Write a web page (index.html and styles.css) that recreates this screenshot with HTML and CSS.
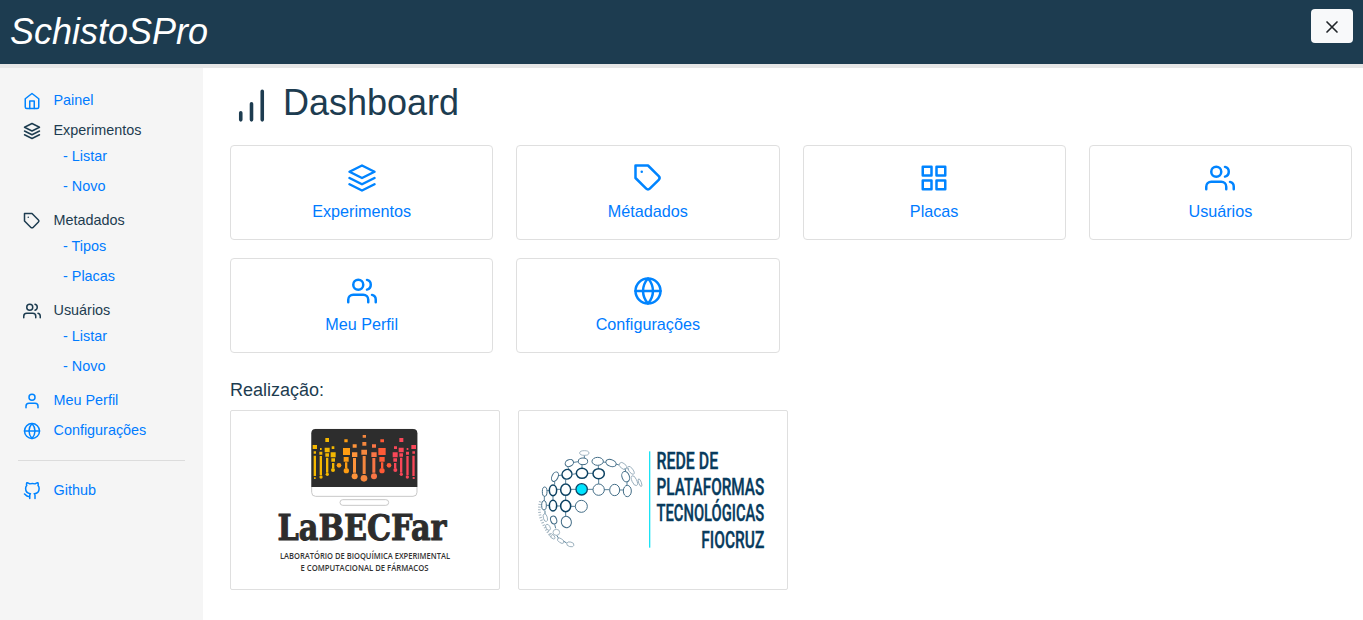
FILE: index.html
```html
<!DOCTYPE html>
<html lang="pt-BR">
<head>
<meta charset="utf-8">
<title>SchistoSPro</title>
<link rel="stylesheet" href="styles.css">
</head>
<body>
<svg class="sprite" aria-hidden="true">
  <symbol id="home" viewBox="0 0 24 24"><path d="M3 9l9-7 9 7v11a2 2 0 0 1-2 2H5a2 2 0 0 1-2-2z"/><path d="M9 22V12h6v10"/></symbol>
  <symbol id="layers" viewBox="0 0 24 24"><path d="M12 2L2 7l10 5 10-5z"/><path d="M2 17l10 5 10-5"/><path d="M2 12l10 5 10-5"/></symbol>
  <symbol id="tag" viewBox="0 0 24 24"><path d="M20.59 13.41l-7.17 7.17a2 2 0 0 1-2.83 0L2 12V2h10l8.59 8.59a2 2 0 0 1 0 2.82z"/><path d="M7 7h.01"/></symbol>
  <symbol id="users" viewBox="0 0 24 24"><path d="M17 21v-2a4 4 0 0 0-4-4H5a4 4 0 0 0-4 4v2"/><circle cx="9" cy="7" r="4"/><path d="M23 21v-2a4 4 0 0 0-3-3.87"/><path d="M16 3.13a4 4 0 0 1 0 7.75"/></symbol>
  <symbol id="user" viewBox="0 0 24 24"><path d="M20 21v-2a4 4 0 0 0-4-4H8a4 4 0 0 0-4 4v2"/><circle cx="12" cy="7" r="4"/></symbol>
  <symbol id="globe" viewBox="0 0 24 24"><circle cx="12" cy="12" r="10"/><path d="M2 12h20"/><path d="M12 2a15.3 15.3 0 0 1 4 10 15.3 15.3 0 0 1-4 10 15.3 15.3 0 0 1-4-10 15.3 15.3 0 0 1 4-10z"/></symbol>
  <symbol id="grid" viewBox="0 0 24 24"><path d="M3 3h7v7H3zM14 3h7v7h-7zM14 14h7v7h-7zM3 14h7v7H3z"/></symbol>
  <symbol id="github" viewBox="0 0 24 24"><path d="M9 19c-5 1.5-5-2.5-7-3m14 6v-3.87a3.37 3.37 0 0 0-.94-2.61c3.14-.35 6.44-1.54 6.44-7A5.44 5.44 0 0 0 20 4.77 5.07 5.07 0 0 0 19.91 1S18.73.65 16 2.48a13.38 13.38 0 0 0-7 0C6.27.65 5.09 1 5.09 1A5.07 5.07 0 0 0 5 4.77a5.44 5.44 0 0 0-1.5 3.78c0 5.42 3.3 6.61 6.44 7A3.37 3.37 0 0 0 9 18.13V22"/></symbol>
  <symbol id="bars" viewBox="0 0 24 24"><path d="M18 20V4M12 20v-9M6 20v-4"/></symbol>
  <symbol id="close" viewBox="0 0 24 24"><path d="M18 6L6 18M6 6l12 12"/></symbol>
</svg>

<header class="topbar">
  <div class="brand">SchistoSPro</div>
  <button class="close-btn" aria-label="Fechar"><svg class="icon"><use href="#close"/></svg></button>
</header>

<div class="layout">
  <nav class="sidebar">
    <a class="item"><svg class="icon"><use href="#home"/></svg>Painel</a>
    <div class="item group"><svg class="icon"><use href="#layers"/></svg>Experimentos</div>
    <div class="sub"><a>- Listar</a><a>- Novo</a></div>
    <div class="item group"><svg class="icon"><use href="#tag"/></svg>Metadados</div>
    <div class="sub"><a>- Tipos</a><a>- Placas</a></div>
    <div class="item group"><svg class="icon"><use href="#users"/></svg>Usuários</div>
    <div class="sub"><a>- Listar</a><a>- Novo</a></div>
    <a class="item"><svg class="icon"><use href="#user"/></svg>Meu Perfil</a>
    <a class="item"><svg class="icon"><use href="#globe"/></svg>Configurações</a>
    <hr class="divider">
    <a class="item"><svg class="icon"><use href="#github"/></svg>Github</a>
  </nav>

  <main class="content">
    <h1 class="title"><svg class="icon"><use href="#bars"/></svg>Dashboard</h1>
    <div class="cards">
      <a class="card"><svg class="icon"><use href="#layers"/></svg>Experimentos</a>
      <a class="card"><svg class="icon"><use href="#tag"/></svg>Métadados</a>
      <a class="card"><svg class="icon"><use href="#grid"/></svg>Placas</a>
      <a class="card"><svg class="icon"><use href="#users"/></svg>Usuários</a>
      <a class="card"><svg class="icon"><use href="#users"/></svg>Meu Perfil</a>
      <a class="card"><svg class="icon"><use href="#globe"/></svg>Configurações</a>
    </div>
    <h2 class="subtitle">Realização:</h2>
    <div class="partners">
      <div class="partner">
        <svg class="logo" viewBox="0 0 268 178">
          <g transform="translate(64 9) scale(.33333)">
            <rect x="50" y="28" width="316" height="201" rx="12" fill="#fff" stroke="#c8c8c8" stroke-width="3"/>
            <path d="M49 201V40q0-13 13-13h292q13 0 13 13v161z" fill="#2d2d2d"/>
            <rect x="135" y="239" width="146" height="17" rx="8.500" fill="#fff" stroke="#c8c8c8" stroke-width="3"/>
            <g fill="#f5b800">
              <path d="M53 75h13v12H53zM56 94h7v7h-7zM56 107h7v61h-7zM57 172h5v5h-5zM75 84h5v6h-5zM73 95h9v9h-9zM74 108h7v57h-7zM91 54h11v12H91zM89 83h15v14H89zM91 100h11v10H91zM93 113h7v45h-7zM110 79h8v8h-8zM107 97h15v15h-15zM109 115h11v10h-11zM111 129h7v16h-7z"/>
              <circle cx="78" cy="171" r="5"/><circle cx="97" cy="163" r="5"/><circle cx="114" cy="150" r="6"/>
            </g>
            <g fill="#ff9d12">
              <path d="M144 84h21v21h-21zM146 111h15v14h-15zM150 127h7v17h-7zM148 58h10v9h-10z"/>
              <circle cx="132" cy="136" r="7"/><circle cx="154" cy="152" r="8"/>
            </g>
            <g fill="#ff943a">
              <path d="M173 73h12v10h-12zM171 97h16v14h-16zM174 114h9v44h-9z"/>
              <circle cx="179" cy="169" r="9"/>
            </g>
            <g fill="#f5873e">
              <path d="M203 45h10v8h-10zM202 66h12v11h-12zM199 89h17v15h-17zM203 108h9v54h-9z"/>
              <circle cx="207" cy="175" r="10"/>
            </g>
            <g fill="#fa7545">
              <path d="M231 73h12v10h-12zM229 97h16v14h-16zM232 114h9v44h-9z"/>
              <circle cx="237" cy="169" r="9"/>
            </g>
            <g fill="#ff5a36">
              <path d="M256 58h11v9h-11zM250 84h22v21h-22zM253 111h16v14h-16zM258 127h7v17h-7z"/>
              <circle cx="261" cy="152" r="8"/><circle cx="282" cy="136" r="7"/>
            </g>
            <g fill="#f94758">
              <path d="M297 79h9v8h-9zM293 97h15v15h-15zM295 115h11v10h-11zM297 129h7v16h-7zM313 54h12v12h-12zM311 83h15v14h-15zM313 100h11v10h-11zM315 113h7v45h-7zM335 84h5v6h-5zM333 95h9v9h-9zM334 108h7v57h-7zM349 75h14v12h-14zM352 94h8v7h-8zM352 107h7v61h-7zM353 171h6v6h-6z"/>
              <circle cx="301" cy="150" r="6"/><circle cx="319" cy="163" r="5"/><circle cx="337" cy="171" r="5"/>
            </g>
          </g>
          <text class="labec" x="46.500" y="129" textLength="169" lengthAdjust="spacingAndGlyphs">LaBECFar</text>
          <text class="labec-sub" x="49" y="148.200" textLength="170" lengthAdjust="spacingAndGlyphs">LABORATÓRIO DE BIOQUÍMICA EXPERIMENTAL</text>
          <text class="labec-sub" x="69.500" y="160.200" textLength="128" lengthAdjust="spacingAndGlyphs">E COMPUTACIONAL DE FÁRMACOS</text>
        </svg>
      </div>
      <div class="partner">
        <svg class="logo" viewBox="0 0 268 178">
          <g class="net" transform="translate(11 29) scale(.33333)">
            <path class="link" d="M163 46v8M132 67l13-2M156 75v10M113 80l5 10M127 103l12-2M172 100h17M205 76v9M219 66l9 1M258 72l9 3M285 84l2 10M293 86l4 2M206 116v16M222 149h15M269 150h10M291 124v12M172 148h17M122 148h17M80 148h10M51 152h7M107 119v12M107 165v15M107 214v14M122 199h14M80 198h10M49 196h8M69 167v14M43 168v14M74 124v10M84 107l12-2M74 253l3 12M80 286l6 9M100 303l10 6M45 212v10"/>
            <g class="strong">
              <ellipse cx="156" cy="100" rx="17" ry="15"/><ellipse cx="206" cy="101" rx="17" ry="15"/>
              <ellipse cx="111" cy="103" rx="15" ry="14" transform="rotate(-35 111 103)"/><ellipse cx="107" cy="149" rx="15" ry="17"/>
              <ellipse cx="107" cy="198" rx="15" ry="17"/><ellipse cx="69" cy="151" rx="11" ry="16"/><ellipse cx="69" cy="197" rx="11" ry="16"/>
            </g>
            <g class="medium">
              <ellipse cx="75" cy="110" rx="9" ry="15" transform="rotate(25 75 110)"/><ellipse cx="44" cy="155" rx="7" ry="14"/>
              <ellipse cx="42" cy="196" rx="7" ry="14"/><circle cx="206" cy="149" r="17"/><circle cx="154" cy="199" r="18"/>
              <ellipse cx="254" cy="150" rx="15" ry="17"/><ellipse cx="292" cy="153" rx="12" ry="17"/>
              <ellipse cx="109" cy="246" rx="15" ry="17" transform="rotate(-15 109 246)"/><ellipse cx="203" cy="64" rx="17" ry="12"/>
              <ellipse cx="159" cy="64" rx="14" ry="10"/><ellipse cx="118" cy="69" rx="13" ry="10" transform="rotate(-25 118 69)"/>
              <ellipse cx="243" cy="69" rx="16" ry="10" transform="rotate(20 243 69)"/><ellipse cx="287" cy="110" rx="11" ry="16" transform="rotate(-20 287 110)"/>
              <ellipse cx="71" cy="240" rx="9" ry="12" transform="rotate(-20 71 240)"/>
            </g>
            <g class="faint">
              <ellipse cx="163" cy="39" rx="14" ry="7"/><ellipse cx="279" cy="78" rx="13" ry="8" transform="rotate(40 279 78)"/>
              <ellipse cx="303" cy="91" rx="14" ry="6" transform="rotate(55 303 91)"/><ellipse cx="313" cy="122" rx="16" ry="7" transform="rotate(65 313 122)"/>
              <ellipse cx="330" cy="128" rx="12" ry="4" transform="rotate(70 330 128)"/><ellipse cx="46" cy="233" rx="6" ry="12" transform="rotate(-15 46 233)"/>
              <ellipse cx="79" cy="277" rx="10" ry="9"/><ellipse cx="92" cy="302" rx="11" ry="6" transform="rotate(35 92 302)"/>
              <ellipse cx="121" cy="313" rx="11" ry="7" transform="rotate(15 121 313)"/><ellipse cx="54" cy="262" rx="6" ry="10" transform="rotate(-30 54 262)"/>
              <ellipse cx="67" cy="289" rx="10" ry="5" transform="rotate(45 67 289)"/>
            </g>
            <path class="dots" d="M31 184Q23 214 36 244T68 294"/>
            <circle cx="155" cy="148" r="17" fill="#00e5ff" stroke="#0b4668" stroke-width="4"/>
            <path d="M359 34v289" stroke="#1be3f5" stroke-width="4"/>
          </g>
          <g class="rede" transform="translate(137.500 0) scale(.7 1)">
            <text x="0" y="58" textLength="88" lengthAdjust="spacingAndGlyphs">REDE DE</text>
            <text x="0" y="84.300" textLength="154" lengthAdjust="spacingAndGlyphs">PLATAFORMAS</text>
            <text x="0" y="110.500" textLength="154" lengthAdjust="spacingAndGlyphs">TECNOLÓGICAS</text>
            <text x="64" y="136.800" textLength="90" lengthAdjust="spacingAndGlyphs">FIOCRUZ</text>
          </g>
        </svg>
      </div>
    </div>
  </main>
</div>
</body>
</html>
```
FILE: styles.css
```css
* { box-sizing: border-box; }

body {
  margin: 0;
  height: 620px;
  display: flex;
  flex-direction: column;
  overflow: hidden;
  background: #fff;
  color: #1d3c50;
  font-family: "Liberation Sans", Arial, sans-serif;
  font-size: 16px;
}

.sprite { display: none; }

.icon {
  flex: none;
  fill: none;
  stroke: currentColor;
  stroke-width: 2;
  stroke-linecap: round;
  stroke-linejoin: round;
}

.topbar {
  flex: none;
  height: 68px;
  display: flex;
  justify-content: space-between;
  align-items: flex-start;
  padding: 9px 10px 0;
  background: #1d3c50;
  border-bottom: 4px solid #e6e6e6;
}

.brand {
  color: #fff;
  font-size: 36px;
  font-style: italic;
  line-height: 46px;
}

.close-btn {
  width: 42px;
  height: 34px;
  display: flex;
  align-items: center;
  justify-content: center;
  padding: 2px 0 0;
  border: 0;
  border-radius: 4px;
  background: #f8f9fa;
  color: #212529;
}

.close-btn .icon { width: 20px; height: 20px; }

.layout { flex: 1; display: flex; }

.sidebar {
  flex: none;
  width: 203px;
  padding: 17px 18px 0;
  background: #f5f5f5;
  font-size: 14.4px;
}

.sidebar a, .card { color: #007bff; }

.sidebar a .icon, .card .icon { color: #0084ff; }

.item {
  height: 30px;
  display: flex;
  align-items: center;
  gap: 12.500px;
  padding-left: 5px;
}

.sidebar .item.group { color: #1d3c50; }

.item .icon { width: 18px; height: 18px; margin-top: 2px; }

.sub { margin: -4px 0 4px; padding-left: 45px; }

.sub a { display: block; line-height: 30px; }

.divider {
  height: 1px;
  margin: 15px 0 14px;
  border: 0;
  background: #dcdcdc;
}

.content { flex: 1; padding: 13px 11px 0 27px; }

.title {
  display: flex;
  align-items: center;
  gap: 10px;
  height: 44px;
  margin: 0 0 20px;
  font-size: 36px;
  font-weight: 400;
}

.title .icon { width: 43px; height: 43px; margin: 5px 0 0; }

.cards {
  display: grid;
  grid-template-columns: repeat(4, 1fr);
  gap: 18px 23px;
}

.card {
  height: 95px;
  display: flex;
  flex-direction: column;
  align-items: center;
  padding-top: 17px;
  border: 1px solid #dfdfdf;
  border-radius: 4px;
  font-size: 16.200px;
  line-height: 24px;
}

.card .icon { width: 30px; height: 30px; margin-bottom: 6px; }

.subtitle {
  margin: 26px 0 9px;
  font-size: 18px;
  font-weight: 400;
  line-height: 22px;
}

.partners { display: flex; gap: 18px; }

.partner {
  width: 270px;
  height: 180px;
  border: 1px solid #dfdfdf;
  border-radius: 2px;
}

.logo { display: block; width: 268px; height: 178px; }

.labec {
  font: bold 34.500px "DejaVu Serif", serif;
  fill: #2d2d2d;
  stroke: #2d2d2d;
  stroke-width: 1;
}

.labec-sub {
  font: 600 8px "Open Sans", sans-serif;
  fill: #333;
}

.rede {
  font: 500 24px Roboto, sans-serif;
  fill: #083b5d;
  stroke: #083b5d;
  stroke-width: .4;
}

.net { fill: none; }
.link { stroke: #567f98; stroke-width: 3; }
.strong { stroke: #0d4262; stroke-width: 4.500; }
.medium { stroke: #426c86; stroke-width: 3; }
.faint { stroke: #91a8b7; stroke-width: 2.500; }
.dots { stroke: #a4b5c0; stroke-width: 8; stroke-dasharray: 3 5; }
```
